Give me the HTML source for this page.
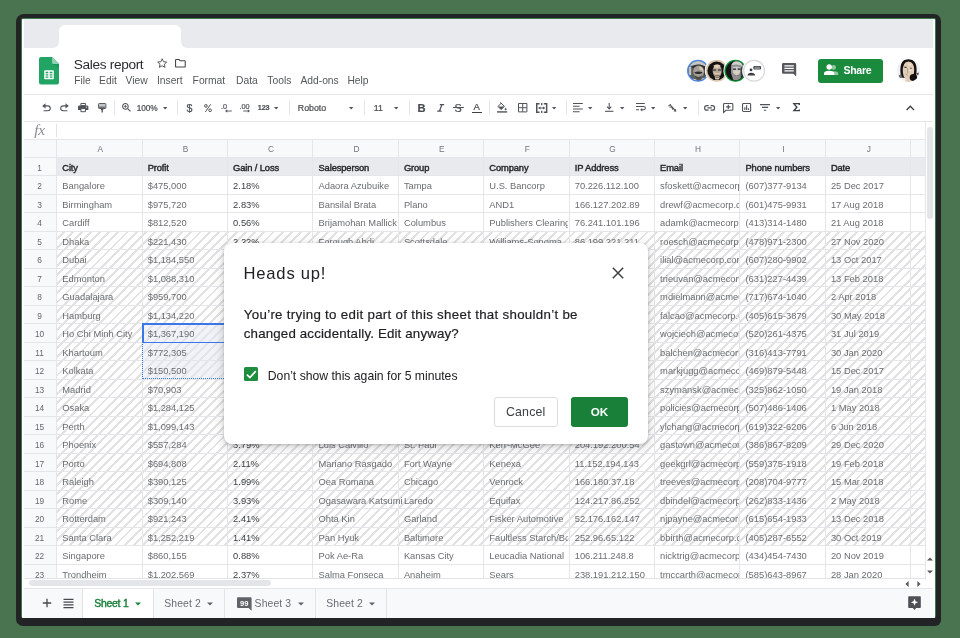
<!DOCTYPE html>
<html><head><meta charset="utf-8"><title>Sales report</title>
<style>
*{box-sizing:border-box}
html,body{margin:0;padding:0}
body{width:960px;height:638px;overflow:hidden;position:relative;background:#4a7450;font-family:"Liberation Sans",sans-serif;-webkit-font-smoothing:antialiased}
.abs{position:absolute}
#bezel{position:absolute;left:16.2px;top:14.2px;width:924.9px;height:612px;background:#222324;border-radius:8px 7px 6px 7px}
#gl{position:absolute;left:20.8px;top:17.7px;width:915.4px;height:600.2px;background:#3c7a4b;border-radius:2px}
#scr{position:absolute;left:21.8px;top:18.6px;width:913.2px;height:599.3px;background:#fff;overflow:hidden;border-radius:1.5px}
/* everything inside #scr is positioned in page coordinates via #pg */
#pg{position:absolute;left:-21.8px;top:-18.6px;width:960px;height:638px;will-change:transform}
.t{position:absolute;white-space:nowrap;line-height:1}
.vl{position:absolute;width:1px;background:#e5e6e9}
.hl{position:absolute;height:1px;background:#e5e6e9}
.cell{position:absolute;white-space:nowrap;overflow:hidden;font-size:9.36px;line-height:18.5px;color:#6a6d71;padding-left:5.6px;letter-spacing:0px}
.cell.h{font-weight:normal;color:#26282b;letter-spacing:-0.12px;-webkit-text-stroke:0.42px #26282b}
.cell.c{color:#3c4043}
.rn{position:absolute;left:22px;width:35px;text-align:center;font-size:8.3px;line-height:18.5px;color:#63676c}
.cn{position:absolute;text-align:center;font-size:8.3px;line-height:18px;color:#70757a}
.menu{position:absolute;top:74.6px;font-size:11px;line-height:12px;color:#54575c;white-space:nowrap}
.sep{position:absolute;top:99.5px;width:1px;height:15.5px;background:#e3e5e8}
.ic{position:absolute;overflow:visible}
.tb{position:absolute;font-size:8.6px;line-height:10px;color:#4a4e53;-webkit-text-stroke:0.22px #4a4e53;white-space:nowrap;top:102.6px}
</style></head><body>
<div id="bezel"></div><div id="gl"></div>
<div id="scr"><div id="pg">

<div class="abs" style="left:20px;top:18px;width:920px;height:30px;background:#e9eaee"></div>
<div class="abs" style="left:58.5px;top:24.6px;width:122.5px;height:24px;background:#fff;border-radius:6px 6px 0 0"></div>
<svg class="ic" style="left:52.5px;top:42px" width="6" height="6"><path d="M6 0V6H0A6 6 0 0 0 6 0Z" fill="#fff"/></svg>
<svg class="ic" style="left:181px;top:42px" width="6" height="6"><path d="M0 0V6H6A6 6 0 0 1 0 0Z" fill="#fff"/></svg>
<div class="abs" style="left:20px;top:48px;width:920px;height:48px;background:#fff"></div>
<!-- sheets logo -->
<svg class="ic" style="left:38.8px;top:57px" width="20" height="27.4" viewBox="0 0 20 27.4">
<path d="M2 0H13L20 7V25.4Q20 27.4 18 27.4H2Q0 27.4 0 25.4V2Q0 0 2 0Z" fill="#21a464"/>
<path d="M13 0L20 7H14.6Q13 7 13 5.4Z" fill="#8ed1b1"/>
<path d="M13.2 7H20V11Z" fill="#1a8a52" opacity="0.5"/>
<rect x="5.2" y="13.3" width="9.6" height="8.9" rx="0.6" fill="#fff"/>
<path d="M6.6 14.8H9.3V16.2H6.6ZM10.7 14.8H13.4V16.2H10.7ZM6.6 17.3H9.3V18.5H6.6ZM10.7 17.3H13.4V18.5H10.7ZM6.6 19.6H9.3V20.8H6.6ZM10.7 19.6H13.4V20.8H10.7Z" fill="#21a464"/>
</svg>
<div class="t" style="left:73.8px;top:57.6px;font-size:13.7px;color:#2a2c2f;letter-spacing:-0.36px">Sales report</div>
<!-- star -->
<svg class="ic" style="left:157.4px;top:58.2px" width="10.4" height="10" viewBox="0 0 24 23"><path d="M12 1.8L15.1 8.6L22.4 9.4L17 14.4L18.5 21.6L12 17.9L5.5 21.6L7 14.4L1.6 9.4L8.9 8.6Z" fill="none" stroke="#45484c" stroke-width="2.1" stroke-linejoin="round"/></svg>
<!-- folder -->
<svg class="ic" style="left:175.4px;top:59.4px" width="10.8" height="8.6" viewBox="0 0 10.8 8.6"><path d="M1.2 0.55H4.1L5.2 1.7H9.6Q10.25 1.7 10.25 2.3V7.4Q10.25 8.05 9.6 8.05H1.2Q0.55 8.05 0.55 7.4V1.2Q0.55 0.55 1.2 0.55Z" fill="none" stroke="#45484c" stroke-width="1.1"/></svg>
<!-- menus -->
<div class="menu" style="left:74.2px;font-size:10.3px">File</div>
<div class="menu" style="left:99.1px;font-size:10.3px">Edit</div>
<div class="menu" style="left:125.6px;font-size:10.3px">View</div>
<div class="menu" style="left:156.9px;font-size:10.3px">Insert</div>
<div class="menu" style="left:192.6px;font-size:10.3px">Format</div>
<div class="menu" style="left:236px;font-size:10.3px">Data</div>
<div class="menu" style="left:267.3px;font-size:10.3px">Tools</div>
<div class="menu" style="left:300.4px;font-size:10.3px">Add-ons</div>
<div class="menu" style="left:347.4px;font-size:10.3px">Help</div>

<!-- collaborator avatars -->
<svg class="ic" style="left:684px;top:56px" width="84" height="30" viewBox="684 56 84 30">
<defs>
<clipPath id="c1"><circle cx="698" cy="70.8" r="9.7"/></clipPath>
<clipPath id="c2"><circle cx="716.7" cy="70.8" r="9.3"/></clipPath>
<clipPath id="c3"><circle cx="735.4" cy="70.8" r="9.7"/></clipPath>
</defs>
<!-- avatar 1 -->
<circle cx="698" cy="70.8" r="11" fill="#4a86e8"/>
<g clip-path="url(#c1)">
<rect x="686" y="59" width="24" height="24" fill="#5c5f5e"/>
<path d="M690 66Q692 60.4 699 60.6Q706 61 707.4 67L700 64.4Z" fill="#c4c6c6"/>
<path d="M691.6 66.6Q698 62.4 705.4 66.8L705 68.4Q698 65 692 68.2Z" fill="#2e302f"/>
<ellipse cx="698.6" cy="71.4" rx="5.4" ry="6" fill="#a39f97"/>
<path d="M699 66.4Q703.6 67 703.4 72.6Q702 69.4 699.4 69.2Z" fill="#d8c8b4"/>
<path d="M694.2 72.6Q698.4 70.6 702.6 72.6Q702 74.2 698.4 74Q694.8 74.2 694.2 72.6Z" fill="#2b2b2b"/>
<path d="M695 75.6Q698.4 78.4 701.8 75.6Q701 79.6 698.4 79.8Q695.8 79.6 695 75.6Z" fill="#4c4a47"/>
<rect x="688.6" y="66.6" width="2.6" height="8.4" fill="#bfc1c1"/>
<path d="M688 82Q692 77 696 79.6L698.4 82ZM700.6 82L702 78.4Q706 76.6 708 79V82Z" fill="#d9d9d6"/>
<path d="M703.6 66L707.6 70V78L704.4 75Z" fill="#242424"/>
</g>
<!-- avatar 2 -->
<circle cx="716.7" cy="70.8" r="12" fill="#fff"/>
<circle cx="716.7" cy="70.8" r="11" fill="#dcc6ad"/>
<g clip-path="url(#c2)">
<rect x="705" y="59" width="24" height="24" fill="#141212"/>
<ellipse cx="717.2" cy="71" rx="4.5" ry="6.4" fill="#b5a696"/>
<path d="M713.4 65.4Q717.4 63.4 720.6 65.6Q719.6 68.4 717 68.2Q714.4 68.4 713.4 65.4Z" fill="#e2cdb4"/>
<path d="M712.8 69.4H716.2V70.4H712.8ZM718 69.4H721.4V70.4H718Z" fill="#1c1a1a"/>
<path d="M713.8 71.4Q715 73.8 717 72.8Q719.4 74 720.8 71.4L720.4 74.6H714Z" fill="#dcc6ad"/>
<path d="M714 74.8Q717.2 76.6 720.6 74.8Q717.2 75.6 714 74.8Z" fill="#3a3330"/>
<path d="M714.6 76.8Q717.2 78.6 719.8 76.8L719 79.4H715.4Z" fill="#d7c2aa"/>
</g>
<!-- avatar 3 -->
<circle cx="735.4" cy="70.8" r="12" fill="#fff"/>
<circle cx="735.4" cy="70.8" r="11" fill="#0d8f35"/>
<g clip-path="url(#c3)">
<rect x="724" y="59" width="24" height="24" fill="#151414"/>
<path d="M731 66Q732 60.6 738 61Q743.6 62 743.4 69L741 78Q737 81.6 733 79.4L731 73Z" fill="#8f8f8f"/>
<path d="M731.6 65Q733 60.6 738.4 61.2Q742 62 742.4 66Q738 63.4 731.6 65Z" fill="#d2d2d2"/>
<path d="M732.6 67.2Q736.4 65.6 740.6 67.4V72L737 76.6L733 73Z" fill="#c9c9c9"/>
<path d="M733 68.6H736V69.8H733ZM737.6 68.6H740.6V69.8H737.6Z" fill="#1d1d1d"/>
<path d="M734.4 70.6Q736.6 72 739 70.8L738.4 73.4Q736.6 74 734.8 73.2Z" fill="#e3cfb6"/>
<path d="M734 75.4Q736.6 76.8 739.4 75.2Q736.8 76 734 75.4Z" fill="#2d2d2d"/>
<path d="M740.6 68L743.6 66V76L740.6 78Z" fill="#3c3c3c"/>
</g>
<!-- avatar 4 (anonymous + chat) -->
<circle cx="754.1" cy="70.7" r="12" fill="#fff"/>
<circle cx="754.1" cy="70.7" r="10.4" fill="#fff" stroke="#d4d7db" stroke-width="1.2"/>
<circle cx="751" cy="69.9" r="1.45" fill="#3c4043"/>
<path d="M747.5 75.5Q747.7 72.7 751.3 72.7Q754.9 72.7 755.1 75.5Z" fill="#3c4043"/>
<rect x="753.3" y="65.9" width="7.7" height="3.7" rx="1.1" fill="#3c4043"/>
<path d="M754.4 67.2H759.9M754.4 68.4H759.9" stroke="#cfd2d6" stroke-width="0.6"/>
</svg>

<!-- comments icon -->
<svg class="ic" style="left:782px;top:63.4px" width="14.4" height="14" viewBox="0 0 14.4 14"><path d="M1.3 0H12.9Q14.2 0 14.2 1.3V13.6L11.4 10.8H1.3Q0 10.8 0 9.5V1.3Q0 0 1.3 0Z" fill="#55585c"/><path d="M2.4 2.9H11.8M2.4 5.4H11.8M2.4 7.9H11.8" stroke="#fff" stroke-width="1.15"/></svg>

<!-- share button -->
<div class="abs" style="left:817.6px;top:58.6px;width:65.3px;height:24.5px;border-radius:3px;background:#1a8a3d"></div>
<svg class="ic" style="left:824.3px;top:64.2px" width="14.4" height="11" viewBox="0 0 14.4 11">
<circle cx="9.7" cy="3.4" r="2.3" fill="#8fc7a1"/><path d="M7.6 10.9V9.6Q7.6 7.4 9.9 7.2Q14.2 7.2 14.2 9.6V10.9Z" fill="#8fc7a1"/>
<circle cx="5.2" cy="2.9" r="2.75" fill="#fff"/><path d="M0 10.9V9.4Q0 6.8 5.2 6.8Q10.4 6.8 10.4 9.4V10.9Z" fill="#fff"/></svg>
<div class="t" style="left:843.4px;top:65.4px;font-size:10.6px;font-weight:bold;color:#fff;letter-spacing:-0.28px">Share</div>

<!-- account avatar -->
<svg class="ic" style="left:895px;top:57px" width="28" height="28" viewBox="895 57 28 28">
<defs><clipPath id="c5"><circle cx="908.6" cy="70.4" r="11.5"/></clipPath></defs>
<circle cx="908.6" cy="70.4" r="11.5" fill="#f0f1f5"/>
<g clip-path="url(#c5)">
<path d="M900.4 72Q899.6 59.2 908.4 59.3Q917 59.4 916.6 71Q916.8 76 914.6 79.4L901.6 77.4Q900.6 75 900.4 72Z" fill="#141011"/>
<path d="M902.8 72Q902.4 61.6 908.4 61.4Q914.4 61.6 914.2 70.6Q914 76.6 910.6 79.6L910.8 82H905.4L905.6 79.4Q903 76.8 902.8 72Z" fill="#e3ceb5"/>
<path d="M904.4 66.8H906.6V67.8H904.4Z" fill="#1f1a1a"/><path d="M910.2 67.8H911.8V68.8H910.2Z" fill="#5c534f"/>
<path d="M907.6 68V73.6" stroke="#9b9ea3" stroke-width="0.9"/>
<path d="M908.4 65.4L910.8 64.2M909.2 70.4H911.4" stroke="#f4f4f6" stroke-width="0.9"/>
<path d="M905.6 73.8L907.4 75.6" stroke="#8f8f8f" stroke-width="0.9"/>
<ellipse cx="913.4" cy="77.4" rx="3.7" ry="3.5" fill="#141011"/>
<path d="M898.4 75.4L901.2 74L902.2 77.4L899.4 78.4Z" fill="#6d6f72"/>
<path d="M916 73.6L919 72.4L918 75.4Z" fill="#4a4446"/>
</g>
</svg>

<!-- undo -->
<svg class="ic" style="left:42.4px;top:103px" width="9" height="8.4" viewBox="0 0 9 8.4"><path d="M2.6 2.9H5.6Q8.3 2.9 8.3 5.3Q8.3 7.7 5.6 7.7H1.6" fill="none" stroke="#50545a" stroke-width="1.1"/><path d="M3.5 0.3L0.2 2.9L3.5 5.5Z" fill="#50545a"/></svg>
<!-- redo -->
<svg class="ic" style="left:60.4px;top:103px" width="9" height="8.4" viewBox="0 0 9 8.4"><path d="M6.4 2.9H3.4Q0.7 2.9 0.7 5.3Q0.7 7.7 3.4 7.7H7.4" fill="none" stroke="#50545a" stroke-width="1.1"/><path d="M5.5 0.3L8.8 2.9L5.5 5.5Z" fill="#50545a"/></svg>
<!-- print -->
<svg class="ic" style="left:78.3px;top:102.8px" width="10.4" height="9.2" viewBox="0 0 10.4 9.2"><path d="M2.9 0.5H7.5V2.6H2.9Z" fill="#fff" stroke="#50545a" stroke-width="1"/><path d="M1.3 2.6H9.1Q10.4 2.6 10.4 3.9V7H0V3.9Q0 2.6 1.3 2.6Z" fill="#50545a"/><path d="M2.9 5.6H7.5V8.7H2.9Z" fill="#fff" stroke="#50545a" stroke-width="1"/><circle cx="8.6" cy="4.1" r="0.55" fill="#fff"/></svg>
<!-- paint format -->
<svg class="ic" style="left:97.6px;top:103px" width="8.4" height="9.4" viewBox="0 0 8.4 9.4"><rect x="0.5" y="0.5" width="7.4" height="5" rx="0.8" fill="#c3c6c9" stroke="#5a5e63" stroke-width="1"/><path d="M1 3.6H7.4V5H1Z" fill="#6a6e73"/><path d="M3 5.6H5.4V7H3Z" fill="#50545a"/><path d="M3.5 7H4.9V9.4H3.5Z" fill="#50545a"/></svg>
<div class="sep" style="left:114.4px"></div>
<!-- zoom -->
<svg class="ic" style="left:122px;top:102.9px" width="9" height="8.8" viewBox="0 0 9 8.8"><circle cx="3.4" cy="3.4" r="2.8" fill="none" stroke="#50545a" stroke-width="1.05"/><path d="M5.4 5.4L8.5 8.4" stroke="#50545a" stroke-width="1.2"/><path d="M3.4 1.9V4.9M1.9 3.4H4.9" stroke="#50545a" stroke-width="0.85"/></svg>
<div class="tb" style="left:136.7px;font-size:8.3px;top:103px;letter-spacing:-0.12px">100%</div>
<svg class="ic" style="left:162.7px;top:106.6px" width="4.4" height="2.4"><path d="M0 0H4.4L2.2 2.4Z" fill="#50545a"/></svg>
<div class="sep" style="left:177.4px"></div>
<div class="tb" style="left:186.4px;font-size:10.6px;top:101.6px;line-height:12px">$</div>
<svg class="ic" style="left:204.2px;top:104.4px" width="8" height="8.2" viewBox="0 0 8 8.2"><circle cx="1.9" cy="1.9" r="1.35" fill="none" stroke="#50545a" stroke-width="1"/><circle cx="6.1" cy="6.3" r="1.35" fill="none" stroke="#50545a" stroke-width="1"/><path d="M6.6 0.3L1.4 7.9" stroke="#50545a" stroke-width="1"/></svg>
<!-- .0 <- -->
<div class="tb" style="left:221px;font-size:7.2px;top:102.2px;color:#5f6368">.0</div>
<svg class="ic" style="left:225.4px;top:108.8px" width="7" height="4" viewBox="0 0 7 4"><path d="M0.6 2H6.8" stroke="#50545a" stroke-width="0.9"/><path d="M2.2 0.2L0.3 2L2.2 3.8Z" fill="#50545a"/></svg>
<!-- .00 -> -->
<div class="tb" style="left:239.4px;font-size:7.2px;top:102.2px;color:#5f6368">.00</div>
<svg class="ic" style="left:243.2px;top:108.8px" width="7" height="4" viewBox="0 0 7 4"><path d="M0.2 2H6.4" stroke="#50545a" stroke-width="0.9"/><path d="M4.8 0.2L6.7 2L4.8 3.8Z" fill="#50545a"/></svg>
<div class="tb" style="left:257.8px;font-size:7.2px;top:103.2px;font-weight:bold;color:#50545a;letter-spacing:-0.15px">123</div>
<svg class="ic" style="left:274px;top:106.6px" width="4.4" height="2.4"><path d="M0 0H4.4L2.2 2.4Z" fill="#50545a"/></svg>
<div class="sep" style="left:288.6px"></div>
<div class="tb" style="left:297.8px;font-size:8.8px">Roboto</div>
<svg class="ic" style="left:349.4px;top:106.6px" width="4.4" height="2.4"><path d="M0 0H4.4L2.2 2.4Z" fill="#50545a"/></svg>
<div class="sep" style="left:364px"></div>
<div class="tb" style="left:373.8px;font-size:8.8px">11</div>
<svg class="ic" style="left:394.2px;top:106.6px" width="4.4" height="2.4"><path d="M0 0H4.4L2.2 2.4Z" fill="#50545a"/></svg>
<div class="sep" style="left:409.2px"></div>
<!-- B I S A -->
<div class="tb" style="left:417.4px;font-size:11.2px;top:101.6px;line-height:12px;font-weight:bold">B</div>
<svg class="ic" style="left:436.6px;top:103.6px" width="7.4" height="7.8" viewBox="0 0 7.4 7.8"><path d="M2.8 0.6H7.2M0.2 7.2H4.6M5 0.6L2.4 7.2" stroke="#50545a" stroke-width="1.25" fill="none"/></svg>
<div class="tb" style="left:454.6px;font-size:10.8px;top:101.8px;line-height:12px">S</div>
<div class="abs" style="left:453px;top:107px;width:10.6px;height:1px;background:#50545a"></div>
<div class="tb" style="left:473.6px;font-size:9.6px;top:101.4px;line-height:12px">A</div>
<div class="abs" style="left:472.2px;top:111.6px;width:9.6px;height:1.6px;background:#3c4043"></div>
<div class="sep" style="left:489px"></div>
<!-- fill color -->
<svg class="ic" style="left:496.8px;top:102.4px" width="10" height="11" viewBox="0 0 10 11"><path d="M3.3 0.3L7.4 4.4L4.1 7.6L0.9 4.4L4.1 1.3" fill="none" stroke="#50545a" stroke-width="1"/><path d="M1.2 4.5H7.2L4.1 7.4Z" fill="#50545a"/><path d="M8.6 5.4Q9.6 6.8 9.6 7.4Q9.6 8.2 8.6 8.2Q7.6 8.2 7.6 7.4Q7.6 6.8 8.6 5.4Z" fill="#50545a"/><rect x="0" y="9.3" width="10.2" height="1.25" fill="#3c4043"/></svg>
<!-- borders -->
<svg class="ic" style="left:517.6px;top:103.2px" width="9.4" height="9.4" viewBox="0 0 9.4 9.4"><path d="M0.5 0.5H8.9V8.9H0.5ZM4.7 0.5V8.9M0.5 4.7H8.9" fill="none" stroke="#50545a" stroke-width="1"/></svg>
<!-- merge -->
<svg class="ic" style="left:535.6px;top:102.8px" width="11.4" height="10" viewBox="0 0 11.4 10"><path d="M3.6 0.75H0.75V9.25H3.6M7.8 0.75H10.65V9.25H7.8" fill="none" stroke="#50545a" stroke-width="1.5"/><path d="M5.7 0V2.2M5.7 7.8V10" stroke="#50545a" stroke-width="1.3"/><path d="M2.6 5H8.8" stroke="#50545a" stroke-width="1"/><path d="M4.4 3.4L2.4 5L4.4 6.6ZM7 3.4L9 5L7 6.6Z" fill="#50545a"/></svg>
<svg class="ic" style="left:551.6px;top:106.6px" width="4.4" height="2.4"><path d="M0 0H4.4L2.2 2.4Z" fill="#50545a"/></svg>
<div class="sep" style="left:566.1px"></div>
<!-- h-align -->
<svg class="ic" style="left:573.2px;top:102.8px" width="9.8" height="9.4" viewBox="0 0 9.8 9.4"><path d="M0 0.6H9.8M0 3.3H6.6M0 6H9.8M0 8.7H6.6" stroke="#50545a" stroke-width="1.05"/></svg>
<svg class="ic" style="left:588.4px;top:106.6px" width="4.4" height="2.4"><path d="M0 0H4.4L2.2 2.4Z" fill="#50545a"/></svg>
<!-- v-align -->
<svg class="ic" style="left:605px;top:102.9px" width="8.4" height="9" viewBox="0 0 8.4 9"><path d="M4.2 0V5.4" stroke="#50545a" stroke-width="1.1"/><path d="M2.1 3.6L4.2 5.9L6.3 3.6" fill="none" stroke="#50545a" stroke-width="1.1"/><path d="M0 8.3H8.4" stroke="#50545a" stroke-width="1.1"/></svg>
<svg class="ic" style="left:619.7px;top:106.6px" width="4.4" height="2.4"><path d="M0 0H4.4L2.2 2.4Z" fill="#50545a"/></svg>
<!-- wrap -->
<svg class="ic" style="left:636px;top:102.8px" width="10" height="8.6" viewBox="0 0 10 8.6"><path d="M0 0.6H8.8M0 3.5H7.6Q9.4 3.5 9.4 5.1Q9.4 6.7 7.6 6.7H5.4M0 6.7H3" fill="none" stroke="#50545a" stroke-width="1.05"/><path d="M6.2 5L4.2 6.7L6.2 8.4Z" fill="#50545a"/></svg>
<svg class="ic" style="left:651.4px;top:106.6px" width="4.4" height="2.4"><path d="M0 0H4.4L2.2 2.4Z" fill="#50545a"/></svg>
<!-- rotate -->
<svg class="ic" style="left:667.6px;top:103.8px" width="8.6" height="8" viewBox="0 0 8.6 8"><path d="M0.5 2.2L2.4 0.5L5 5.8" fill="none" stroke="#50545a" stroke-width="1.05"/><path d="M1.4 3.1L3.8 2.8" stroke="#50545a" stroke-width="0.9"/><path d="M3.8 2.6L7.2 6.4" stroke="#50545a" stroke-width="1.1"/><path d="M8.4 7.8L5.4 7.2L7.8 4.8Z" fill="#50545a"/></svg>
<svg class="ic" style="left:682.6px;top:106.6px" width="4.4" height="2.4"><path d="M0 0H4.4L2.2 2.4Z" fill="#50545a"/></svg>
<div class="sep" style="left:697.5px"></div>
<!-- link -->
<svg class="ic" style="left:704px;top:104.6px" width="11.2" height="5.8" viewBox="0 0 11.2 5.8"><path d="M4.6 0.6H2.9Q0.6 0.6 0.6 2.9Q0.6 5.2 2.9 5.2H4.6M6.6 0.6H8.3Q10.6 0.6 10.6 2.9Q10.6 5.2 8.3 5.2H6.6M3.4 2.9H7.8" fill="none" stroke="#50545a" stroke-width="1.15"/></svg>
<!-- insert comment -->
<svg class="ic" style="left:722.8px;top:102.5px" width="10.4" height="10" viewBox="0 0 10.4 10"><path d="M1.4 0.55H9Q9.85 0.55 9.85 1.4V6.4Q9.85 7.25 9 7.25H3L0.55 9.5V1.4Q0.55 0.55 1.4 0.55Z" fill="none" stroke="#50545a" stroke-width="1.1"/><path d="M5.3 1.7V6.1M3.1 3.9H7.5" stroke="#50545a" stroke-width="1.2"/></svg>
<!-- chart -->
<svg class="ic" style="left:741.8px;top:103px" width="9.2" height="9" viewBox="0 0 9.2 9"><rect x="0.55" y="0.55" width="8.1" height="7.9" rx="0.9" fill="none" stroke="#50545a" stroke-width="1.1"/><path d="M2.8 6.9V4.3M4.6 6.9V2.2M6.4 6.9V5.3" stroke="#50545a" stroke-width="1.1"/></svg>
<!-- filter -->
<svg class="ic" style="left:760.2px;top:104px" width="10" height="7" viewBox="0 0 10 7"><path d="M0 0.6H10M1.9 3.4H8.1M3.8 6.2H6.2" stroke="#50545a" stroke-width="1.1"/></svg>
<svg class="ic" style="left:775.9px;top:106.6px" width="4.4" height="2.4"><path d="M0 0H4.4L2.2 2.4Z" fill="#50545a"/></svg>
<!-- sigma -->
<svg class="ic" style="left:793.2px;top:103.4px" width="6.8" height="8.4" viewBox="0 0 6.8 8.4"><path d="M6.3 2V0.7H0.9L3.9 4.2L0.9 7.7H6.3V6.4" fill="none" stroke="#3c4043" stroke-width="1.35"/></svg>
<!-- collapse caret -->
<svg class="ic" style="left:906.4px;top:105px" width="8.6" height="5.6" viewBox="0 0 8.6 5.6"><path d="M0.6 5L4.3 1.2L8 5" fill="none" stroke="#3c4043" stroke-width="1.3"/></svg>

<div class="hl" style="left:20px;top:94px;width:920px;background:#e4e6e9"></div>
<div class="hl" style="left:20px;top:120.6px;width:920px;background:#e4e6e9"></div>
<div class="t" style="left:34.2px;top:122.2px;font-family:'Liberation Serif',serif;font-style:italic;font-size:15.5px;color:#8a8d91;letter-spacing:-0.2px">fx</div>
<div class="vl" style="left:55.9px;top:123.5px;height:13.8px;background:#e0e2e5"></div>
<div class="abs" style="left:20px;top:139.3px;width:905.1px;height:18px;background:#f8f9fa"></div>
<div class="abs" style="left:20px;top:139.3px;width:36.7px;height:439px;background:#f8f9fa"></div>
<div class="abs" style="left:56.7px;top:157.3px;width:868.4px;height:18.5px;background:#e8eaed"></div>
<div class="abs" id="hatch" style="left:56.7px;top:231.3px;width:868.4px;height:314.5px;background:repeating-linear-gradient(135deg,rgba(0,0,0,0) 0,rgba(0,0,0,0) 4.4px,#e2e2e2 4.35px,#e2e2e2 6.45px)"></div>
<div class="abs" style="left:142.1px;top:323.8px;width:85.4px;height:55.5px;background:rgba(228,232,242,0.5)"></div>
<div class="vl" style="left:56.2px;top:139.3px;height:439px"></div>
<div class="vl" style="left:141.6px;top:139.3px;height:439px"></div>
<div class="vl" style="left:227px;top:139.3px;height:439px"></div>
<div class="vl" style="left:312.4px;top:139.3px;height:439px"></div>
<div class="vl" style="left:397.8px;top:139.3px;height:439px"></div>
<div class="vl" style="left:483.2px;top:139.3px;height:439px"></div>
<div class="vl" style="left:568.6px;top:139.3px;height:439px"></div>
<div class="vl" style="left:654px;top:139.3px;height:439px"></div>
<div class="vl" style="left:739.4px;top:139.3px;height:439px"></div>
<div class="vl" style="left:824.8px;top:139.3px;height:439px"></div>
<div class="vl" style="left:910.2px;top:139.3px;height:439px"></div>
<div class="vl" style="left:925.1px;top:121px;height:457.3px"></div>
<div class="hl" style="left:20px;top:138.8px;width:905.1px"></div>
<div class="hl" style="left:20px;top:156.8px;width:905.1px"></div>
<div class="hl" style="left:20px;top:175.3px;width:905.1px"></div>
<div class="hl" style="left:20px;top:193.8px;width:905.1px"></div>
<div class="hl" style="left:20px;top:212.3px;width:905.1px"></div>
<div class="hl" style="left:20px;top:230.8px;width:905.1px"></div>
<div class="hl" style="left:20px;top:249.3px;width:905.1px"></div>
<div class="hl" style="left:20px;top:267.8px;width:905.1px"></div>
<div class="hl" style="left:20px;top:286.3px;width:905.1px"></div>
<div class="hl" style="left:20px;top:304.8px;width:905.1px"></div>
<div class="hl" style="left:20px;top:323.3px;width:905.1px"></div>
<div class="hl" style="left:20px;top:341.8px;width:905.1px"></div>
<div class="hl" style="left:20px;top:360.3px;width:905.1px"></div>
<div class="hl" style="left:20px;top:378.8px;width:905.1px"></div>
<div class="hl" style="left:20px;top:397.3px;width:905.1px"></div>
<div class="hl" style="left:20px;top:415.8px;width:905.1px"></div>
<div class="hl" style="left:20px;top:434.3px;width:905.1px"></div>
<div class="hl" style="left:20px;top:452.8px;width:905.1px"></div>
<div class="hl" style="left:20px;top:471.3px;width:905.1px"></div>
<div class="hl" style="left:20px;top:489.8px;width:905.1px"></div>
<div class="hl" style="left:20px;top:508.3px;width:905.1px"></div>
<div class="hl" style="left:20px;top:526.8px;width:905.1px"></div>
<div class="hl" style="left:20px;top:545.3px;width:905.1px"></div>
<div class="hl" style="left:20px;top:563.8px;width:905.1px"></div>
<div class="cn" style="left:57.5px;top:140px;width:85.4px">A</div>
<div class="cn" style="left:142.9px;top:140px;width:85.4px">B</div>
<div class="cn" style="left:228.3px;top:140px;width:85.4px">C</div>
<div class="cn" style="left:313.7px;top:140px;width:85.4px">D</div>
<div class="cn" style="left:399.1px;top:140px;width:85.4px">E</div>
<div class="cn" style="left:484.5px;top:140px;width:85.4px">F</div>
<div class="cn" style="left:569.9px;top:140px;width:85.4px">G</div>
<div class="cn" style="left:655.3px;top:140px;width:85.4px">H</div>
<div class="cn" style="left:740.7px;top:140px;width:85.4px">I</div>
<div class="cn" style="left:826.1px;top:140px;width:85.4px">J</div>
<div class="rn" style="top:158.8px">1</div>
<div class="rn" style="top:177.3px">2</div>
<div class="rn" style="top:195.8px">3</div>
<div class="rn" style="top:214.3px">4</div>
<div class="rn" style="top:232.8px">5</div>
<div class="rn" style="top:251.3px">6</div>
<div class="rn" style="top:269.8px">7</div>
<div class="rn" style="top:288.3px">8</div>
<div class="rn" style="top:306.8px">9</div>
<div class="rn" style="top:325.3px">10</div>
<div class="rn" style="top:343.8px">11</div>
<div class="rn" style="top:362.3px">12</div>
<div class="rn" style="top:380.8px">13</div>
<div class="rn" style="top:399.3px">14</div>
<div class="rn" style="top:417.8px">15</div>
<div class="rn" style="top:436.3px">16</div>
<div class="rn" style="top:454.8px">17</div>
<div class="rn" style="top:473.3px">18</div>
<div class="rn" style="top:491.8px">19</div>
<div class="rn" style="top:510.3px">20</div>
<div class="rn" style="top:528.8px">21</div>
<div class="rn" style="top:547.3px">22</div>
<div class="rn" style="top:565.8px">23</div>
<div class="cell h" style="left:56.7px;top:158.7px;width:84.6px;height:18.5px">City</div>
<div class="cell h" style="left:142.1px;top:158.7px;width:84.6px;height:18.5px">Profit</div>
<div class="cell h" style="left:227.5px;top:158.7px;width:84.6px;height:18.5px">Gain / Loss</div>
<div class="cell h" style="left:312.9px;top:158.7px;width:84.6px;height:18.5px">Salesperson</div>
<div class="cell h" style="left:398.3px;top:158.7px;width:84.6px;height:18.5px">Group</div>
<div class="cell h" style="left:483.7px;top:158.7px;width:84.6px;height:18.5px">Company</div>
<div class="cell h" style="left:569.1px;top:158.7px;width:84.6px;height:18.5px">IP Address</div>
<div class="cell h" style="left:654.5px;top:158.7px;width:84.6px;height:18.5px">Email</div>
<div class="cell h" style="left:739.9px;top:158.7px;width:84.6px;height:18.5px">Phone numbers</div>
<div class="cell h" style="left:825.3px;top:158.7px;width:84.6px;height:18.5px">Date</div>
<div class="cell" style="left:56.7px;top:177.2px;width:84.6px;height:18.5px">Bangalore</div>
<div class="cell" style="left:142.1px;top:177.2px;width:84.6px;height:18.5px">$475,000</div>
<div class="cell c" style="left:227.5px;top:177.2px;width:84.6px;height:18.5px">2.18%</div>
<div class="cell" style="left:312.9px;top:177.2px;width:84.6px;height:18.5px">Adaora Azubuike</div>
<div class="cell" style="left:398.3px;top:177.2px;width:84.6px;height:18.5px">Tampa</div>
<div class="cell" style="left:483.7px;top:177.2px;width:84.6px;height:18.5px">U.S. Bancorp</div>
<div class="cell" style="left:569.1px;top:177.2px;width:84.6px;height:18.5px">70.226.112.100</div>
<div class="cell" style="left:654.5px;top:177.2px;width:84.6px;height:18.5px">sfoskett@acmecorp.com</div>
<div class="cell" style="left:739.9px;top:177.2px;width:84.6px;height:18.5px">(607)377-9134</div>
<div class="cell" style="left:825.3px;top:177.2px;width:84.6px;height:18.5px">25 Dec 2017</div>
<div class="cell" style="left:56.7px;top:195.7px;width:84.6px;height:18.5px">Birmingham</div>
<div class="cell" style="left:142.1px;top:195.7px;width:84.6px;height:18.5px">$975,720</div>
<div class="cell c" style="left:227.5px;top:195.7px;width:84.6px;height:18.5px">2.83%</div>
<div class="cell" style="left:312.9px;top:195.7px;width:84.6px;height:18.5px">Bansilal Brata</div>
<div class="cell" style="left:398.3px;top:195.7px;width:84.6px;height:18.5px">Plano</div>
<div class="cell" style="left:483.7px;top:195.7px;width:84.6px;height:18.5px">AND1</div>
<div class="cell" style="left:569.1px;top:195.7px;width:84.6px;height:18.5px">166.127.202.89</div>
<div class="cell" style="left:654.5px;top:195.7px;width:84.6px;height:18.5px">drewf@acmecorp.com</div>
<div class="cell" style="left:739.9px;top:195.7px;width:84.6px;height:18.5px">(601)475-9931</div>
<div class="cell" style="left:825.3px;top:195.7px;width:84.6px;height:18.5px">17 Aug 2018</div>
<div class="cell" style="left:56.7px;top:214.2px;width:84.6px;height:18.5px">Cardiff</div>
<div class="cell" style="left:142.1px;top:214.2px;width:84.6px;height:18.5px">$812,520</div>
<div class="cell c" style="left:227.5px;top:214.2px;width:84.6px;height:18.5px">0.56%</div>
<div class="cell" style="left:312.9px;top:214.2px;width:84.6px;height:18.5px">Brijamohan Mallick</div>
<div class="cell" style="left:398.3px;top:214.2px;width:84.6px;height:18.5px">Columbus</div>
<div class="cell" style="left:483.7px;top:214.2px;width:84.6px;height:18.5px">Publishers Clearing</div>
<div class="cell" style="left:569.1px;top:214.2px;width:84.6px;height:18.5px">76.241.101.196</div>
<div class="cell" style="left:654.5px;top:214.2px;width:84.6px;height:18.5px">adamk@acmecorp.com</div>
<div class="cell" style="left:739.9px;top:214.2px;width:84.6px;height:18.5px">(413)314-1480</div>
<div class="cell" style="left:825.3px;top:214.2px;width:84.6px;height:18.5px">21 Aug 2018</div>
<div class="cell" style="left:56.7px;top:232.7px;width:84.6px;height:18.5px">Dhaka</div>
<div class="cell" style="left:142.1px;top:232.7px;width:84.6px;height:18.5px">$221,430</div>
<div class="cell c" style="left:227.5px;top:232.7px;width:84.6px;height:18.5px">2.22%</div>
<div class="cell" style="left:312.9px;top:232.7px;width:84.6px;height:18.5px">Forough Abdi</div>
<div class="cell" style="left:398.3px;top:232.7px;width:84.6px;height:18.5px">Scottsdale</div>
<div class="cell" style="left:483.7px;top:232.7px;width:84.6px;height:18.5px">Williams-Sonoma</div>
<div class="cell" style="left:569.1px;top:232.7px;width:84.6px;height:18.5px">86.199.221.211</div>
<div class="cell" style="left:654.5px;top:232.7px;width:84.6px;height:18.5px">roesch@acmecorp.com</div>
<div class="cell" style="left:739.9px;top:232.7px;width:84.6px;height:18.5px">(478)971-2300</div>
<div class="cell" style="left:825.3px;top:232.7px;width:84.6px;height:18.5px">27 Nov 2020</div>
<div class="cell" style="left:56.7px;top:251.2px;width:84.6px;height:18.5px">Dubai</div>
<div class="cell" style="left:142.1px;top:251.2px;width:84.6px;height:18.5px">$1,184,550</div>
<div class="cell c" style="left:227.5px;top:251.2px;width:84.6px;height:18.5px">1.73%</div>
<div class="cell" style="left:312.9px;top:251.2px;width:84.6px;height:18.5px">Habib Joe</div>
<div class="cell" style="left:398.3px;top:251.2px;width:84.6px;height:18.5px">Denver</div>
<div class="cell" style="left:483.7px;top:251.2px;width:84.6px;height:18.5px">Xerox</div>
<div class="cell" style="left:569.1px;top:251.2px;width:84.6px;height:18.5px">12.19.88.201</div>
<div class="cell" style="left:654.5px;top:251.2px;width:84.6px;height:18.5px">ilial@acmecorp.com</div>
<div class="cell" style="left:739.9px;top:251.2px;width:84.6px;height:18.5px">(607)280-9902</div>
<div class="cell" style="left:825.3px;top:251.2px;width:84.6px;height:18.5px">13 Oct 2017</div>
<div class="cell" style="left:56.7px;top:269.7px;width:84.6px;height:18.5px">Edmonton</div>
<div class="cell" style="left:142.1px;top:269.7px;width:84.6px;height:18.5px">$1,088,310</div>
<div class="cell c" style="left:227.5px;top:269.7px;width:84.6px;height:18.5px">1.21%</div>
<div class="cell" style="left:312.9px;top:269.7px;width:84.6px;height:18.5px">Ikaika Hakuole</div>
<div class="cell" style="left:398.3px;top:269.7px;width:84.6px;height:18.5px">Houston</div>
<div class="cell" style="left:483.7px;top:269.7px;width:84.6px;height:18.5px">Yum</div>
<div class="cell" style="left:569.1px;top:269.7px;width:84.6px;height:18.5px">77.12.201.9</div>
<div class="cell" style="left:654.5px;top:269.7px;width:84.6px;height:18.5px">trieuvan@acmecorp.com</div>
<div class="cell" style="left:739.9px;top:269.7px;width:84.6px;height:18.5px">(631)227-4439</div>
<div class="cell" style="left:825.3px;top:269.7px;width:84.6px;height:18.5px">13 Feb 2018</div>
<div class="cell" style="left:56.7px;top:288.2px;width:84.6px;height:18.5px">Guadalajara</div>
<div class="cell" style="left:142.1px;top:288.2px;width:84.6px;height:18.5px">$959,700</div>
<div class="cell c" style="left:227.5px;top:288.2px;width:84.6px;height:18.5px">0.93%</div>
<div class="cell" style="left:312.9px;top:288.2px;width:84.6px;height:18.5px">Ji-Yoo Kim</div>
<div class="cell" style="left:398.3px;top:288.2px;width:84.6px;height:18.5px">Memphis</div>
<div class="cell" style="left:483.7px;top:288.2px;width:84.6px;height:18.5px">Zappos</div>
<div class="cell" style="left:569.1px;top:288.2px;width:84.6px;height:18.5px">10.8.18.72</div>
<div class="cell" style="left:654.5px;top:288.2px;width:84.6px;height:18.5px">mdielmann@acmecorp.com</div>
<div class="cell" style="left:739.9px;top:288.2px;width:84.6px;height:18.5px">(717)674-1040</div>
<div class="cell" style="left:825.3px;top:288.2px;width:84.6px;height:18.5px">2 Apr 2018</div>
<div class="cell" style="left:56.7px;top:306.7px;width:84.6px;height:18.5px">Hamburg</div>
<div class="cell" style="left:142.1px;top:306.7px;width:84.6px;height:18.5px">$1,134,220</div>
<div class="cell c" style="left:227.5px;top:306.7px;width:84.6px;height:18.5px">2.04%</div>
<div class="cell" style="left:312.9px;top:306.7px;width:84.6px;height:18.5px">Kalea Kim</div>
<div class="cell" style="left:398.3px;top:306.7px;width:84.6px;height:18.5px">Miami</div>
<div class="cell" style="left:483.7px;top:306.7px;width:84.6px;height:18.5px">Acme</div>
<div class="cell" style="left:569.1px;top:306.7px;width:84.6px;height:18.5px">18.7.2.201</div>
<div class="cell" style="left:654.5px;top:306.7px;width:84.6px;height:18.5px">falcao@acmecorp.com</div>
<div class="cell" style="left:739.9px;top:306.7px;width:84.6px;height:18.5px">(405)615-3879</div>
<div class="cell" style="left:825.3px;top:306.7px;width:84.6px;height:18.5px">30 May 2018</div>
<div class="cell" style="left:56.7px;top:325.2px;width:84.6px;height:18.5px">Ho Chi Minh City</div>
<div class="cell" style="left:142.1px;top:325.2px;width:84.6px;height:18.5px">$1,367,190</div>
<div class="cell c" style="left:227.5px;top:325.2px;width:84.6px;height:18.5px">1.11%</div>
<div class="cell" style="left:312.9px;top:325.2px;width:84.6px;height:18.5px">Lani Lee</div>
<div class="cell" style="left:398.3px;top:325.2px;width:84.6px;height:18.5px">Austin</div>
<div class="cell" style="left:483.7px;top:325.2px;width:84.6px;height:18.5px">Apex</div>
<div class="cell" style="left:569.1px;top:325.2px;width:84.6px;height:18.5px">1.2.3.4</div>
<div class="cell" style="left:654.5px;top:325.2px;width:84.6px;height:18.5px">wojciech@acmecorp.com</div>
<div class="cell" style="left:739.9px;top:325.2px;width:84.6px;height:18.5px">(520)261-4375</div>
<div class="cell" style="left:825.3px;top:325.2px;width:84.6px;height:18.5px">31 Jul 2019</div>
<div class="cell" style="left:56.7px;top:343.7px;width:84.6px;height:18.5px">Khartoum</div>
<div class="cell" style="left:142.1px;top:343.7px;width:84.6px;height:18.5px">$772,305</div>
<div class="cell c" style="left:227.5px;top:343.7px;width:84.6px;height:18.5px">3.02%</div>
<div class="cell" style="left:312.9px;top:343.7px;width:84.6px;height:18.5px">Lesieli</div>
<div class="cell" style="left:398.3px;top:343.7px;width:84.6px;height:18.5px">Tulsa</div>
<div class="cell" style="left:483.7px;top:343.7px;width:84.6px;height:18.5px">Bose</div>
<div class="cell" style="left:569.1px;top:343.7px;width:84.6px;height:18.5px">5.6.7.8</div>
<div class="cell" style="left:654.5px;top:343.7px;width:84.6px;height:18.5px">balchen@acmecorp.com</div>
<div class="cell" style="left:739.9px;top:343.7px;width:84.6px;height:18.5px">(316)413-7791</div>
<div class="cell" style="left:825.3px;top:343.7px;width:84.6px;height:18.5px">30 Jan 2020</div>
<div class="cell" style="left:56.7px;top:362.2px;width:84.6px;height:18.5px">Kolkata</div>
<div class="cell" style="left:142.1px;top:362.2px;width:84.6px;height:18.5px">$150,500</div>
<div class="cell c" style="left:227.5px;top:362.2px;width:84.6px;height:18.5px">0.44%</div>
<div class="cell" style="left:312.9px;top:362.2px;width:84.6px;height:18.5px">Li Na</div>
<div class="cell" style="left:398.3px;top:362.2px;width:84.6px;height:18.5px">Omaha</div>
<div class="cell" style="left:483.7px;top:362.2px;width:84.6px;height:18.5px">Citi</div>
<div class="cell" style="left:569.1px;top:362.2px;width:84.6px;height:18.5px">9.9.9.9</div>
<div class="cell" style="left:654.5px;top:362.2px;width:84.6px;height:18.5px">markjugg@acmecorp.com</div>
<div class="cell" style="left:739.9px;top:362.2px;width:84.6px;height:18.5px">(469)879-5448</div>
<div class="cell" style="left:825.3px;top:362.2px;width:84.6px;height:18.5px">15 Dec 2017</div>
<div class="cell" style="left:56.7px;top:380.7px;width:84.6px;height:18.5px">Madrid</div>
<div class="cell" style="left:142.1px;top:380.7px;width:84.6px;height:18.5px">$70,903</div>
<div class="cell c" style="left:227.5px;top:380.7px;width:84.6px;height:18.5px">2.50%</div>
<div class="cell" style="left:312.9px;top:380.7px;width:84.6px;height:18.5px">Lin</div>
<div class="cell" style="left:398.3px;top:380.7px;width:84.6px;height:18.5px">Reno</div>
<div class="cell" style="left:483.7px;top:380.7px;width:84.6px;height:18.5px">Dell</div>
<div class="cell" style="left:569.1px;top:380.7px;width:84.6px;height:18.5px">2.2.2.2</div>
<div class="cell" style="left:654.5px;top:380.7px;width:84.6px;height:18.5px">szymansk@acmecorp.com</div>
<div class="cell" style="left:739.9px;top:380.7px;width:84.6px;height:18.5px">(325)862-1050</div>
<div class="cell" style="left:825.3px;top:380.7px;width:84.6px;height:18.5px">19 Jan 2018</div>
<div class="cell" style="left:56.7px;top:399.2px;width:84.6px;height:18.5px">Osaka</div>
<div class="cell" style="left:142.1px;top:399.2px;width:84.6px;height:18.5px">$1,284,125</div>
<div class="cell c" style="left:227.5px;top:399.2px;width:84.6px;height:18.5px">1.90%</div>
<div class="cell" style="left:312.9px;top:399.2px;width:84.6px;height:18.5px">Liu</div>
<div class="cell" style="left:398.3px;top:399.2px;width:84.6px;height:18.5px">Boise</div>
<div class="cell" style="left:483.7px;top:399.2px;width:84.6px;height:18.5px">Ebay</div>
<div class="cell" style="left:569.1px;top:399.2px;width:84.6px;height:18.5px">3.3.3.3</div>
<div class="cell" style="left:654.5px;top:399.2px;width:84.6px;height:18.5px">policies@acmecorp.com</div>
<div class="cell" style="left:739.9px;top:399.2px;width:84.6px;height:18.5px">(507)486-1406</div>
<div class="cell" style="left:825.3px;top:399.2px;width:84.6px;height:18.5px">1 May 2018</div>
<div class="cell" style="left:56.7px;top:417.7px;width:84.6px;height:18.5px">Perth</div>
<div class="cell" style="left:142.1px;top:417.7px;width:84.6px;height:18.5px">$1,099,143</div>
<div class="cell c" style="left:227.5px;top:417.7px;width:84.6px;height:18.5px">1.05%</div>
<div class="cell" style="left:312.9px;top:417.7px;width:84.6px;height:18.5px">Lo</div>
<div class="cell" style="left:398.3px;top:417.7px;width:84.6px;height:18.5px">Mesa</div>
<div class="cell" style="left:483.7px;top:417.7px;width:84.6px;height:18.5px">Ford</div>
<div class="cell" style="left:569.1px;top:417.7px;width:84.6px;height:18.5px">4.4.4.4</div>
<div class="cell" style="left:654.5px;top:417.7px;width:84.6px;height:18.5px">ylchang@acmecorp.com</div>
<div class="cell" style="left:739.9px;top:417.7px;width:84.6px;height:18.5px">(619)322-6206</div>
<div class="cell" style="left:825.3px;top:417.7px;width:84.6px;height:18.5px">6 Jun 2018</div>
<div class="cell" style="left:56.7px;top:436.2px;width:84.6px;height:18.5px">Phoenix</div>
<div class="cell" style="left:142.1px;top:436.2px;width:84.6px;height:18.5px">$557,284</div>
<div class="cell c" style="left:227.5px;top:436.2px;width:84.6px;height:18.5px">3.79%</div>
<div class="cell" style="left:312.9px;top:436.2px;width:84.6px;height:18.5px">Luis Calvillo</div>
<div class="cell" style="left:398.3px;top:436.2px;width:84.6px;height:18.5px">St. Paul</div>
<div class="cell" style="left:483.7px;top:436.2px;width:84.6px;height:18.5px">Kerr-McGee</div>
<div class="cell" style="left:569.1px;top:436.2px;width:84.6px;height:18.5px">204.192.200.54</div>
<div class="cell" style="left:654.5px;top:436.2px;width:84.6px;height:18.5px">gastown@acmecorp.com</div>
<div class="cell" style="left:739.9px;top:436.2px;width:84.6px;height:18.5px">(386)867-8209</div>
<div class="cell" style="left:825.3px;top:436.2px;width:84.6px;height:18.5px">29 Dec 2020</div>
<div class="cell" style="left:56.7px;top:454.7px;width:84.6px;height:18.5px">Porto</div>
<div class="cell" style="left:142.1px;top:454.7px;width:84.6px;height:18.5px">$694,808</div>
<div class="cell c" style="left:227.5px;top:454.7px;width:84.6px;height:18.5px">2.11%</div>
<div class="cell" style="left:312.9px;top:454.7px;width:84.6px;height:18.5px">Mariano Rasgado</div>
<div class="cell" style="left:398.3px;top:454.7px;width:84.6px;height:18.5px">Fort Wayne</div>
<div class="cell" style="left:483.7px;top:454.7px;width:84.6px;height:18.5px">Kenexa</div>
<div class="cell" style="left:569.1px;top:454.7px;width:84.6px;height:18.5px">11.152.194.143</div>
<div class="cell" style="left:654.5px;top:454.7px;width:84.6px;height:18.5px">geekgrl@acmecorp.com</div>
<div class="cell" style="left:739.9px;top:454.7px;width:84.6px;height:18.5px">(559)375-1918</div>
<div class="cell" style="left:825.3px;top:454.7px;width:84.6px;height:18.5px">19 Feb 2018</div>
<div class="cell" style="left:56.7px;top:473.2px;width:84.6px;height:18.5px">Raleigh</div>
<div class="cell" style="left:142.1px;top:473.2px;width:84.6px;height:18.5px">$390,125</div>
<div class="cell c" style="left:227.5px;top:473.2px;width:84.6px;height:18.5px">1.99%</div>
<div class="cell" style="left:312.9px;top:473.2px;width:84.6px;height:18.5px">Oea Romana</div>
<div class="cell" style="left:398.3px;top:473.2px;width:84.6px;height:18.5px">Chicago</div>
<div class="cell" style="left:483.7px;top:473.2px;width:84.6px;height:18.5px">Venrock</div>
<div class="cell" style="left:569.1px;top:473.2px;width:84.6px;height:18.5px">166.180.37.18</div>
<div class="cell" style="left:654.5px;top:473.2px;width:84.6px;height:18.5px">treeves@acmecorp.com</div>
<div class="cell" style="left:739.9px;top:473.2px;width:84.6px;height:18.5px">(208)704-9777</div>
<div class="cell" style="left:825.3px;top:473.2px;width:84.6px;height:18.5px">15 Mar 2018</div>
<div class="cell" style="left:56.7px;top:491.7px;width:84.6px;height:18.5px">Rome</div>
<div class="cell" style="left:142.1px;top:491.7px;width:84.6px;height:18.5px">$309,140</div>
<div class="cell c" style="left:227.5px;top:491.7px;width:84.6px;height:18.5px">3.93%</div>
<div class="cell" style="left:312.9px;top:491.7px;width:91.4px;height:18.5px">Ogasawara Katsumi</div>
<div class="cell" style="left:398.3px;top:491.7px;width:84.6px;height:18.5px">Laredo</div>
<div class="cell" style="left:483.7px;top:491.7px;width:84.6px;height:18.5px">Equifax</div>
<div class="cell" style="left:569.1px;top:491.7px;width:84.6px;height:18.5px">124.217.86.252</div>
<div class="cell" style="left:654.5px;top:491.7px;width:84.6px;height:18.5px">dbindel@acmecorp.com</div>
<div class="cell" style="left:739.9px;top:491.7px;width:84.6px;height:18.5px">(262)833-1436</div>
<div class="cell" style="left:825.3px;top:491.7px;width:84.6px;height:18.5px">2 May 2018</div>
<div class="cell" style="left:56.7px;top:510.2px;width:84.6px;height:18.5px">Rotterdam</div>
<div class="cell" style="left:142.1px;top:510.2px;width:84.6px;height:18.5px">$921,243</div>
<div class="cell c" style="left:227.5px;top:510.2px;width:84.6px;height:18.5px">2.41%</div>
<div class="cell" style="left:312.9px;top:510.2px;width:84.6px;height:18.5px">Ohta Kin</div>
<div class="cell" style="left:398.3px;top:510.2px;width:84.6px;height:18.5px">Garland</div>
<div class="cell" style="left:483.7px;top:510.2px;width:84.6px;height:18.5px">Fisker Automotive</div>
<div class="cell" style="left:569.1px;top:510.2px;width:84.6px;height:18.5px">52.176.162.147</div>
<div class="cell" style="left:654.5px;top:510.2px;width:84.6px;height:18.5px">njpayne@acmecorp.com</div>
<div class="cell" style="left:739.9px;top:510.2px;width:84.6px;height:18.5px">(615)654-1933</div>
<div class="cell" style="left:825.3px;top:510.2px;width:84.6px;height:18.5px">13 Dec 2018</div>
<div class="cell" style="left:56.7px;top:528.7px;width:84.6px;height:18.5px">Santa Clara</div>
<div class="cell" style="left:142.1px;top:528.7px;width:84.6px;height:18.5px">$1,252,219</div>
<div class="cell c" style="left:227.5px;top:528.7px;width:84.6px;height:18.5px">1.41%</div>
<div class="cell" style="left:312.9px;top:528.7px;width:84.6px;height:18.5px">Pan Hyuk</div>
<div class="cell" style="left:398.3px;top:528.7px;width:84.6px;height:18.5px">Baltimore</div>
<div class="cell" style="left:483.7px;top:528.7px;width:84.6px;height:18.5px">Faultless Starch/Bon</div>
<div class="cell" style="left:569.1px;top:528.7px;width:84.6px;height:18.5px">252.96.65.122</div>
<div class="cell" style="left:654.5px;top:528.7px;width:84.6px;height:18.5px">bbirth@acmecorp.com</div>
<div class="cell" style="left:739.9px;top:528.7px;width:84.6px;height:18.5px">(405)287-6552</div>
<div class="cell" style="left:825.3px;top:528.7px;width:84.6px;height:18.5px">30 Oct 2019</div>
<div class="cell" style="left:56.7px;top:547.2px;width:84.6px;height:18.5px">Singapore</div>
<div class="cell" style="left:142.1px;top:547.2px;width:84.6px;height:18.5px">$860,155</div>
<div class="cell c" style="left:227.5px;top:547.2px;width:84.6px;height:18.5px">0.88%</div>
<div class="cell" style="left:312.9px;top:547.2px;width:84.6px;height:18.5px">Pok Ae-Ra</div>
<div class="cell" style="left:398.3px;top:547.2px;width:84.6px;height:18.5px">Kansas City</div>
<div class="cell" style="left:483.7px;top:547.2px;width:84.6px;height:18.5px">Leucadia National</div>
<div class="cell" style="left:569.1px;top:547.2px;width:84.6px;height:18.5px">106.211.248.8</div>
<div class="cell" style="left:654.5px;top:547.2px;width:84.6px;height:18.5px">nicktrig@acmecorp.com</div>
<div class="cell" style="left:739.9px;top:547.2px;width:84.6px;height:18.5px">(434)454-7430</div>
<div class="cell" style="left:825.3px;top:547.2px;width:84.6px;height:18.5px">20 Nov 2019</div>
<div class="cell" style="left:56.7px;top:565.7px;width:84.6px;height:18.5px">Trondheim</div>
<div class="cell" style="left:142.1px;top:565.7px;width:84.6px;height:18.5px">$1,202,569</div>
<div class="cell c" style="left:227.5px;top:565.7px;width:84.6px;height:18.5px">2.37%</div>
<div class="cell" style="left:312.9px;top:565.7px;width:84.6px;height:18.5px">Salma Fonseca</div>
<div class="cell" style="left:398.3px;top:565.7px;width:84.6px;height:18.5px">Anaheim</div>
<div class="cell" style="left:483.7px;top:565.7px;width:84.6px;height:18.5px">Sears</div>
<div class="cell" style="left:569.1px;top:565.7px;width:84.6px;height:18.5px">238.191.212.150</div>
<div class="cell" style="left:654.5px;top:565.7px;width:84.6px;height:18.5px">tmccarth@acmecorp.com</div>
<div class="cell" style="left:739.9px;top:565.7px;width:84.6px;height:18.5px">(585)643-8967</div>
<div class="cell" style="left:825.3px;top:565.7px;width:84.6px;height:18.5px">28 Jan 2020</div>
<div class="abs" style="left:142.2px;top:323.8px;width:86px;height:55.3px;border:1px dotted #3b78e7"></div>
<div class="abs" style="left:142px;top:322.8px;width:87px;height:20.3px;border:2px solid #3b78e7;border-bottom-width:1.6px"></div>
<div class="abs" style="left:20px;top:578.3px;width:920px;height:11px;background:#fff"></div>
<div class="hl" style="left:20px;top:577.8px;width:920px;background:#e1e3e6"></div>
<div class="abs" style="left:29px;top:580.3px;width:242px;height:5.5px;border-radius:3px;background:#e3e5e8"></div>
<div class="abs" style="left:926.1px;top:121.6px;width:12px;height:457.3px;background:#fff"></div>
<div class="abs" style="left:927.1px;top:126.7px;width:5.5px;height:92.3px;border-radius:3px;background:#e3e5e8"></div>
<svg class="ic" style="left:926.8px;top:557px" width="6" height="4"><path d="M0 3.6L3 0.4L6 3.6Z" fill="#55585c"/></svg>
<svg class="ic" style="left:926.8px;top:570px" width="6" height="4"><path d="M0 0.4L3 3.6L6 0.4Z" fill="#55585c"/></svg>
<svg class="ic" style="left:904.6px;top:581px" width="4" height="6"><path d="M3.6 0L0.4 3L3.6 6Z" fill="#55585c"/></svg>
<svg class="ic" style="left:916.6px;top:581px" width="4" height="6"><path d="M0.4 0L3.6 3L0.4 6Z" fill="#55585c"/></svg>
<div class="abs" style="left:20px;top:588.6px;width:920px;height:32px;background:#f8f9fa"></div>
<div class="hl" style="left:20px;top:588.2px;width:920px;background:#e4e6e9"></div>
<!-- plus -->
<svg class="ic" style="left:41.5px;top:598.2px" width="10" height="10" viewBox="0 0 10 10"><path d="M5 0.8V9.2M0.8 5H9.2" stroke="#45484c" stroke-width="1.3" fill="none"/></svg>
<!-- all sheets -->
<svg class="ic" style="left:62.5px;top:598px" width="11" height="11" viewBox="0 0 11 11"><path d="M0.5 1.4H10.5M0.5 4.1H10.5M0.5 6.9H10.5M0.5 9.6H10.5" stroke="#45484c" stroke-width="1.3" fill="none"/></svg>
<!-- tabs -->
<div class="abs" style="left:82.7px;top:588.6px;width:71px;height:32px;background:#fff"></div>
<div class="vl" style="left:82.2px;top:588.6px;height:32px;background:#e1e3e6"></div>
<div class="vl" style="left:153.4px;top:588.6px;height:32px;background:#e1e3e6"></div>
<div class="vl" style="left:224.2px;top:588.6px;height:32px;background:#e1e3e6"></div>
<div class="vl" style="left:314.8px;top:588.6px;height:32px;background:#e1e3e6"></div>
<div class="vl" style="left:386.4px;top:588.6px;height:32px;background:#e1e3e6"></div>
<div class="t" style="left:94.2px;top:598.8px;font-size:10.4px;color:#188038;-webkit-text-stroke:0.4px #188038;letter-spacing:-0.22px">Sheet 1</div>
<svg class="ic" style="left:135.2px;top:602px" width="6" height="4"><path d="M0 0.4H6L3 3.6Z" fill="#188038"/></svg>
<div class="t" style="left:164.2px;top:598.8px;font-size:10.4px;color:#696d72;letter-spacing:0.12px">Sheet 2</div>
<svg class="ic" style="left:207.2px;top:602px" width="6" height="4"><path d="M0 0.4H6L3 3.6Z" fill="#5f6368"/></svg>
<!-- sheet 3 with comment badge -->
<svg class="ic" style="left:236.5px;top:596.8px" width="15" height="14" viewBox="0 0 15 14"><path d="M1 0.3H13.6Q14.6 0.3 14.6 1.3V13.7L11.6 10.9H1Q0 10.9 0 9.9V1.3Q0 0.3 1 0.3Z" fill="#5f6368"/><text x="7.2" y="8.8" font-family="Liberation Sans" font-size="7.6" font-weight="bold" fill="#fff" text-anchor="middle">99</text></svg>
<div class="t" style="left:254.6px;top:598.8px;font-size:10.4px;color:#696d72;letter-spacing:0.12px">Sheet 3</div>
<svg class="ic" style="left:297.6px;top:602px" width="6" height="4"><path d="M0 0.4H6L3 3.6Z" fill="#5f6368"/></svg>
<div class="t" style="left:326.2px;top:598.8px;font-size:10.4px;color:#696d72;letter-spacing:0.12px">Sheet 2</div>
<svg class="ic" style="left:369.2px;top:602px" width="6" height="4"><path d="M0 0.4H6L3 3.6Z" fill="#5f6368"/></svg>
<!-- explore icon -->
<svg class="ic" style="left:907.6px;top:595.6px" width="13" height="15" viewBox="0 0 13 15"><path d="M1 0.3H12Q12.8 0.3 12.8 1.1V11.2Q12.8 12 12 12H8.2L6.5 14L4.8 12H1Q0.2 12 0.2 11.2V1.1Q0.2 0.3 1 0.3Z" fill="#4d5156"/><path d="M6.5 2.6L7.5 5.2L10.1 6.2L7.5 7.2L6.5 9.8L5.5 7.2L2.9 6.2L5.5 5.2Z" fill="#fff"/></svg>

<div class="abs" id="dlg" style="left:223.8px;top:243.2px;width:423.8px;height:201.1px;background:#fff;border-radius:8px;box-shadow:0 1px 3px rgba(60,64,67,0.28),0 3px 10px 2px rgba(60,64,67,0.16)"></div>
<div class="t" style="left:243.6px;top:265.6px;font-size:16.6px;color:#202124;letter-spacing:0.78px">Heads up!</div>
<svg class="ic" style="left:611.5px;top:266.5px" width="12" height="12" viewBox="0 0 12 12"><path d="M0.8 0.8L11.2 11.2M11.2 0.8L0.8 11.2" stroke="#3c4043" stroke-width="1.5" fill="none"/></svg>
<div class="t" style="left:243.8px;top:308.1px;font-size:13.3px;color:#202124;-webkit-text-stroke:0.18px #202124;letter-spacing:0.3px">You’re trying to edit part of this sheet that shouldn’t be</div>
<div class="t" style="left:243.8px;top:327.4px;font-size:13.3px;color:#202124;-webkit-text-stroke:0.18px #202124;letter-spacing:0.16px">changed accidentally. Edit anyway?</div>
<div class="abs" style="left:243.8px;top:366.8px;width:14.5px;height:14.5px;background:#1e8e3e;border-radius:1.5px"></div>
<svg class="ic" style="left:243.8px;top:366.8px" width="14.5" height="14.5" viewBox="0 0 14.5 14.5"><path d="M2.9 7.6L5.9 10.5L11.8 4.2" stroke="#fff" stroke-width="1.7" fill="none"/></svg>
<div class="t" style="left:267.8px;top:370.2px;font-size:12.2px;color:#202124;letter-spacing:0px">Don’t show this again for 5 minutes</div>
<div class="abs" style="left:493.8px;top:397px;width:63.8px;height:29.5px;border:1px solid #dadce0;border-radius:3px;background:#fff"></div>
<div class="t" style="left:493.8px;top:405.6px;width:63.8px;text-align:center;font-size:12.4px;color:#3c4043;letter-spacing:0.15px">Cancel</div>
<div class="abs" style="left:571.1px;top:397px;width:56.9px;height:29.5px;border-radius:3px;background:#188038"></div>
<div class="t" style="left:571.1px;top:406px;width:56.9px;text-align:center;font-size:11.7px;color:#fff;letter-spacing:0.1px;font-weight:bold">OK</div>

<div class="abs" style="left:20px;top:18px;width:4.2px;height:602px;background:#fff"></div>
<div class="abs" style="left:932.7px;top:18px;width:4px;height:602px;background:#fff"></div>
</div></div>
</body></html>
